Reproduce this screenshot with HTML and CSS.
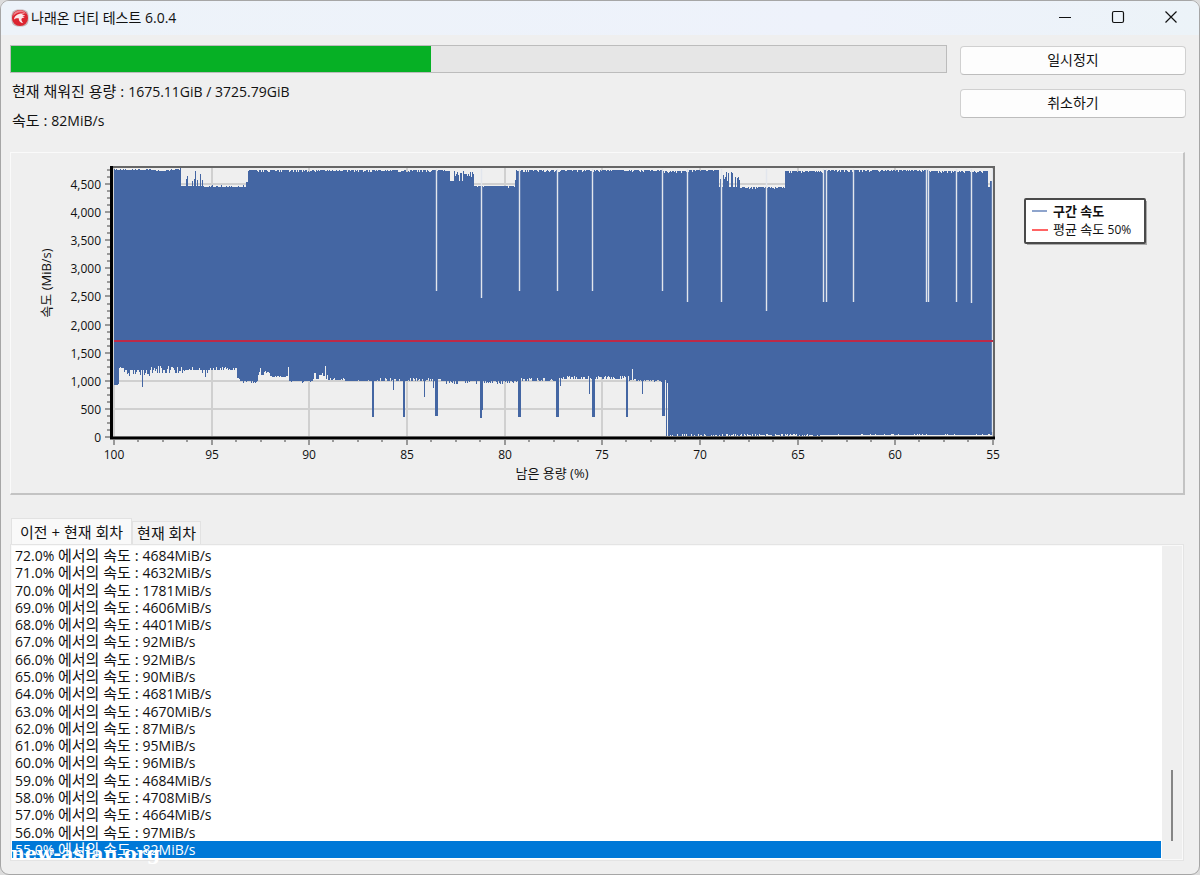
FILE: index.html
```html
<!DOCTYPE html>
<html lang="ko">
<head>
<meta charset="utf-8">
<meta name="viewport" content="width=device-width, initial-scale=1">
<title>나래온 더티 테스트 6.0.4</title>
<link rel="stylesheet" href="styles.css">
</head>
<body>
<div class="window">
  <header class="titlebar">
    <svg class="app-icon" viewBox="0 0 18 18" aria-hidden="true">
      <rect x="0.5" y="0.5" width="17" height="17" rx="6" fill="#c4b4b6"/>
      <circle cx="9" cy="9" r="8" fill="#dc2430"/>
      <path d="M2 7a7 7 0 0 1 13-2c-4-3-9-2-13 2z" fill="#f0808a"/>
      <path d="M3 10.500C3.500 6 8 3.500 14 4.800c-1.500.2-2.500.6-3 1.200 1.400-.2 2.600.1 3.200.9-1.200-.1-2.200.1-2.800.7 1 .1 1.700.6 2 1.400-1-.3-2-.2-2.700.4-.8 1 .1 3 1.600 4.800C9.500 14 7.600 12 7.700 9.300 6 9 4.300 9.300 3 10.500z" fill="#fbe9ea"/>
    </svg>
    <h1 class="title">나래온 더티 테스트 6.0.4</h1>
    <div class="caption-buttons">
      <button class="caption-button" type="button" aria-label="최소화"><svg viewBox="0 0 14 14"><path d="M1 7.500h12"/></svg></button>
      <button class="caption-button" type="button" aria-label="최대화"><svg viewBox="0 0 14 14"><rect x="1.500" y="1.500" width="11" height="11" rx="1.500"/></svg></button>
      <button class="caption-button" type="button" aria-label="닫기"><svg viewBox="0 0 14 14"><path d="M1.500 1.500l11 11M12.500 1.500l-11 11"/></svg></button>
    </div>
  </header>

  <main class="content">
    <section class="status">
      <div class="status-info">
        <progress class="fill-progress" value="1675.11" max="3725.79" aria-label="현재 채워진 용량"></progress>
        <p class="status-line"><span class="ko">현재 채워진 용량 : </span>1675.11GiB / 3725.79GiB</p>
        <p class="status-line"><span class="ko">속도 : </span>82MiB/s</p>
      </div>
      <div class="actions">
        <button class="action" type="button">일시정지</button>
        <button class="action" type="button">취소하기</button>
      </div>
    </section>

    <section class="chart-panel">
      <svg class="chart" viewBox="11 153 1172 340" role="img" aria-label="남은 용량별 속도">
        <g id="grid" class="grid"></g>
        <path id="speed" class="speed"/>
        <g id="gaps"></g>
        <path class="average" d="M114 341H993"/>
        <path class="frame" d="M112 167H994V438"/>
        <path class="axis" d="M111.500 166V438H995"/>
        <g id="ticks" class="ticks"></g>
        <g id="labels" class="labels"></g>
        <text class="axis-title" x="552" y="478" text-anchor="middle">남은 용량 (%)</text>
        <text class="axis-title" transform="translate(51 283) rotate(-90)" text-anchor="middle">속도 (MiB/s)</text>
        <rect class="legend-shadow" x="1027" y="201" width="120" height="44"/>
        <rect class="legend-box" x="1025" y="199" width="120" height="44" rx="1"/>
        <path class="legend-speed" d="M1032 211h15"/>
        <path class="legend-average" d="M1032 230h16"/>
        <text class="legend-text legend-strong" x="1053" y="216">구간 속도</text>
        <text class="legend-text" x="1053" y="234">평균 속도 <tspan class="legend-value">50%</tspan></text>
      </svg>
    </section>

    <section class="log">
      <div class="tabs" role="tablist">
        <button class="tab tab-active" type="button" role="tab" aria-selected="true">이전 + 현재 회차</button>
        <button class="tab" type="button" role="tab" aria-selected="false">현재 회차</button>
      </div>
      <div class="log-page" role="tabpanel">
        <ul class="log-list">
          <li>72.0% <span class="ko">에서의 속도 : </span>4684MiB/s</li>
          <li>71.0% <span class="ko">에서의 속도 : </span>4632MiB/s</li>
          <li>70.0% <span class="ko">에서의 속도 : </span>1781MiB/s</li>
          <li>69.0% <span class="ko">에서의 속도 : </span>4606MiB/s</li>
          <li>68.0% <span class="ko">에서의 속도 : </span>4401MiB/s</li>
          <li>67.0% <span class="ko">에서의 속도 : </span>92MiB/s</li>
          <li>66.0% <span class="ko">에서의 속도 : </span>92MiB/s</li>
          <li>65.0% <span class="ko">에서의 속도 : </span>90MiB/s</li>
          <li>64.0% <span class="ko">에서의 속도 : </span>4681MiB/s</li>
          <li>63.0% <span class="ko">에서의 속도 : </span>4670MiB/s</li>
          <li>62.0% <span class="ko">에서의 속도 : </span>87MiB/s</li>
          <li>61.0% <span class="ko">에서의 속도 : </span>95MiB/s</li>
          <li>60.0% <span class="ko">에서의 속도 : </span>96MiB/s</li>
          <li>59.0% <span class="ko">에서의 속도 : </span>4684MiB/s</li>
          <li>58.0% <span class="ko">에서의 속도 : </span>4708MiB/s</li>
          <li>57.0% <span class="ko">에서의 속도 : </span>4664MiB/s</li>
          <li>56.0% <span class="ko">에서의 속도 : </span>97MiB/s</li>
          <li class="selected">55.0% <span class="ko">에서의 속도 : </span>82MiB/s</li>
        </ul>
        <div class="scrollbar"><div class="scroll-thumb"></div></div>
      </div>
    </section>
  </main>
  <div class="watermark">new-asian.org</div>
</div>
<script src="chart.js"></script>
</body>
</html>
```

FILE: styles.css
```css
* { box-sizing: border-box; }

body {
  margin: 0;
  background: #dcdcdc;
  color: #111;
  font-family: "Open Sans", "Noto Sans CJK KR", sans-serif;
  font-size: 14px;
}

button { font: inherit; color: inherit; }

.ko { font-size: 15px; line-height: 1; }

.window {
  position: relative;
  display: flex;
  flex-direction: column;
  min-height: 100vh;
  border: 1px solid #a6a6a6;
  border-radius: 9px;
  background: #efefef;
  overflow: hidden;
}

.titlebar {
  display: flex;
  align-items: center;
  height: 34px;
  padding-left: 10px;
  background: linear-gradient(90deg, #edf3f9, #eef2fb 70%, #ecf3f8);
}

.app-icon { width: 18px; height: 18px; margin-right: 2px; }

.title {
  flex: 1;
  margin: 0;
  padding-bottom: 2px;
  font-size: 14px;
  font-weight: 400;
}

.caption-buttons { display: flex; padding-right: 2px; }

.caption-button {
  display: flex;
  align-items: center;
  justify-content: center;
  width: 53px;
  height: 34px;
  padding: 0 0 2px;
  border: 0;
  background: none;
}

.caption-button svg {
  width: 14px;
  height: 14px;
  fill: none;
  stroke: #111;
  stroke-width: 1.2;
}

.content {
  flex: 1;
  display: flex;
  flex-direction: column;
  padding: 10px 13px 13px 9px;
}

.status { display: flex; gap: 13px; height: 107px; }

.status-info { flex: 1; }

.fill-progress {
  display: block;
  width: 100%;
  height: 28px;
  margin-bottom: 9px;
  appearance: none;
  border: 1px solid #bcbcbc;
  background: #e6e6e6;
}

.fill-progress::-webkit-progress-bar { background: #e6e6e6; }
.fill-progress::-webkit-progress-value { background: #06b025; }

.status-line { margin: 0 0 9px 2px; line-height: 20px; }

.actions {
  display: flex;
  flex-direction: column;
  gap: 14px;
  width: 226px;
  padding-top: 1px;
}

.action {
  height: 29px;
  padding: 0 0 3px;
  border: 1px solid #d0d0d0;
  border-bottom-color: #bdbdbd;
  border-radius: 4px;
  background: #fdfdfd;
}

.chart-panel {
  margin-right: 1px;
  border: 1px solid #fafafa;
  border-right: 2px solid #c3c3c3;
  border-bottom: 2px solid #c3c3c3;
}

.chart { display: block; width: 100%; height: auto; }

.grid { stroke: #d0d0d0; stroke-width: 2; }
.speed { fill: #4466a3; shape-rendering: crispEdges; }
.average { stroke: #bd2a48; stroke-width: 2; }
.frame { fill: none; stroke: #666; stroke-width: 2; }
.axis { fill: none; stroke: #000; stroke-width: 3; }
.ticks { stroke: #999; stroke-width: 1; }
.labels, .legend-value { font-size: 12px; fill: #111; }
.axis-title, .legend-text { font-size: 13px; fill: #111; }
.legend-shadow { fill: #aaa; }
.legend-box { fill: #fff; stroke: #4a4a4a; stroke-width: 2; }
.legend-speed { stroke: #8ea4cc; stroke-width: 2; }
.legend-average { stroke: #ff6464; stroke-width: 2; }
.legend-strong { font-weight: 700; }

.log {
  flex: 1;
  display: flex;
  flex-direction: column;
  margin: 23px 2px 0 0;
}

.tabs { display: flex; align-items: flex-end; padding-left: 1px; }

.tab {
  height: 23px;
  padding: 0 4px;
  border: 1px solid #e2e2e2;
  border-bottom: 0;
  background: #f3f3f3;
  font-size: 15px;
  line-height: 20px;
}

.tab-active {
  height: 26px;
  padding: 0 8px;
  background: #f9f9f9;
}

.log-page {
  flex: 1;
  display: flex;
  border: 1px solid #e4e4e4;
  padding: 1px;
  background: #f9f9f9;
}

.log-list {
  flex: 1;
  display: flex;
  flex-direction: column;
  margin: 0;
  padding: 1px 1px 1px 0;
  list-style: none;
  background: #fff;
}

.log-list li {
  flex: 1;
  padding-left: 3px;
  line-height: 17px;
}

.log-list .selected { background: #0078d7; color: #fff; }

.scrollbar {
  display: flex;
  flex-direction: column;
  align-items: center;
  justify-content: flex-end;
  width: 20px;
  padding-bottom: 18px;
  background: #efefef;
}

.scroll-thumb { width: 2px; height: 24%; background: #858585; }

.watermark {
  position: absolute;
  left: 10px;
  bottom: 10px;
  color: #fff;
  font-family: "DejaVu Serif", serif;
  font-size: 19px;
  font-weight: 700;
  line-height: 22px;
}
```

FILE: chart.js
```javascript
const SVG = "http://www.w3.org/2000/svg";

function add(parent, name, attrs, text) {
  const node = document.createElementNS(SVG, name);
  for (const key in attrs) node.setAttribute(key, attrs[key]);
  if (text) node.textContent = text;
  document.getElementById(parent).appendChild(node);
}

/* Repeatable noise, so that the graph looks the same on every load. */
let seed = 4711;
function random() {
  seed = (seed * 16807) % 2147483647;
  return seed / 2147483647;
}

/* [first x, usual y, furthest y, chance of leaving the usual y] */
const topBands = [
  [114, 170, 169, 0.4], [156, 171, 170, 0.3], [170, 170, 168, 0.3],
  [181, 186, 171, 0.6], [204, 187, 185, 0.3], [246, 182, 179, 0.5],
  [248, 170, 172, 0.4], [450, 181, 171, 0.7], [474, 186, 188, 0.2],
  [515, 180, 179, 0.5], [516, 171, 170, 0.3], [519, 170, 172, 0.4],
  [663, 171, 173, 0.4], [687, 170, 172, 0.3], [719, 187, 171, 0.5],
  [740, 187, 189, 0.4], [785, 171, 173, 0.3], [824, 170, 172, 0.4],
  [928, 171, 173, 0.3], [988, 187, 186, 0.5], [990, 181, 171, 0.5]
];
const bottomBands = [
  [114, 385, 384, 0.5], [119, 368, 366, 0.5], [124, 370, 376, 0.6],
  [150, 373, 366, 0.7], [185, 370, 367, 0.2], [202, 370, 375, 0.5],
  [210, 370, 367, 0.5], [237, 376, 379, 0.5], [240, 381, 383, 0.4],
  [258, 375, 367, 0.5], [262, 375, 371, 0.5], [270, 377, 376, 0.4],
  [289, 381, 383, 0.2], [313, 379, 372, 0.7], [328, 380, 378, 0.4],
  [345, 381, 380, 0.3], [374, 381, 378, 0.5], [406, 381, 378, 0.5],
  [443, 381, 384, 0.4], [483, 381, 384, 0.5], [521, 381, 378, 0.4],
  [560, 379, 376, 0.5], [600, 379, 376, 0.5], [629, 381, 379, 0.4],
  [645, 380, 382, 0.3], [665, 436, 436, 0.5], [670, 436, 434, 0.5],
  [820, 435, 434, 0.2], [992, 432, 431, 0.5]
];
/* [first x, last x, y]: columns that leave the band. */
const spikes = [
  [142, 142, 387], [205, 205, 377], [288, 288, 367], [325, 325, 366],
  [372, 373, 417], [393, 393, 390], [403, 404, 417], [424, 424, 397],
  [433, 433, 388], [435, 437, 416], [480, 481, 418], [482, 482, 410],
  [518, 520, 417], [556, 558, 417], [560, 560, 386], [589, 589, 394],
  [592, 594, 417], [626, 627, 417], [632, 632, 369], [642, 642, 394],
  [662, 664, 416], [665, 665, 380], [667, 667, 383]
];

function level(bands, x) {
  let band = bands[0];
  for (const b of bands) if (b[0] <= x) band = b;
  const leaves = random() < band[3];
  const amount = 0.3 + 0.7 * random();
  return leaves ? Math.round(band[1] + (band[2] - band[1]) * amount) : band[1];
}

const step = 97.67;
for (let i = 0; i < 10; i++) {
  const x = Math.round(114 + i * step);
  const y = Math.round(437.4 - i * 28.2);
  add("grid", "path", { d: `M${x} 168V437M113 ${y}H993` });
  add("ticks", "path", { d: `M${x} 440v5M105 ${y}h5`, "stroke-width": 2 });
  add("labels", "text", { x, y: 459, "text-anchor": "middle" }, String(100 - i * 5));
  add("labels", "text", { x: 101, y: y + 5, "text-anchor": "end" }, (i * 500).toLocaleString("en-US"));
  for (let n = 1; n < 4; n++) {
    if (i < 9) add("ticks", "path", { d: `M${Math.round(x + n * step / 4)} 440v2`, "stroke-width": 2 });
    if (i < 9 || n < 3) add("ticks", "path", { d: `M107 ${Math.round(y - n * 7)}h3`, "stroke-width": 2 });
  }
}

let path = "";
for (let x = 114; x < 993; x++) {
  const top = level(topBands, x);
  let bottom = level(bottomBands, x);
  for (const s of spikes) if (x >= s[0] && x <= s[1]) bottom = s[2];
  path += `M${x} ${top}h1V${bottom}h-1z`;
}
document.getElementById("speed").setAttribute("d", path);

const gaps = [
  [436, 291], [481, 298], [519, 291], [557, 291], [592, 291], [662, 291],
  [687, 302], [721, 302], [766, 311], [823, 302], [826, 302], [853, 302],
  [926, 302], [928, 302], [956, 302], [971, 303], [992, 432]
];
for (const [x, y] of gaps) {
  add("gaps", "path", { d: `M${x}.5 169V${y}`, stroke: "#e2e6ed", "stroke-width": 1.4 });
}
```
